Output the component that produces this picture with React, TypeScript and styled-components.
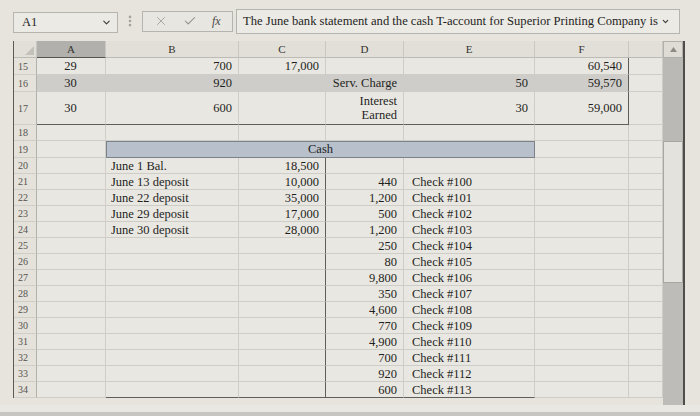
import React from 'react';
import styled, { createGlobalStyle } from 'styled-components';
import { Check, ChevronDown, EllipsisVertical, X } from 'lucide-react';

type Align = 'left' | 'right' | 'center';

interface Spec {
  text?: React.ReactNode;
  align?: Align;
  indent?: number;
}

interface RowDef {
  n: number;
  band?: boolean;
  bottomThick?: boolean;
  thickRight?: number[];
  cells: Spec[];
}

const GlobalStyle = createGlobalStyle`
  * { box-sizing: border-box; }
  html, body { margin: 0; padding: 0; background: #e6e4dd; }
  body { font-family: 'Liberation Serif', 'Times New Roman', serif; color: #1f1f1e; }
`;

const Page = styled.div`
  width: 700px;
  height: 416px;
  overflow: hidden;
  display: flex;
  flex-direction: column;
  background: #e6e4dd;
`;

const Toolbar = styled.div`
  height: 41px;
  flex: none;
  display: flex;
  align-items: center;
  padding: 1px 0 0 13px;
`;

const NameBox = styled.div`
  width: 105px;
  height: 21px;
  margin-top: 3px;
  display: flex;
  align-items: center;
  justify-content: space-between;
  padding: 0 5px 0 8px;
  border: 1px solid #b6b4ae;
  background: #eceae4;
  font-size: 12.5px;
`;

const Dots = styled.div`
  width: 24px;
  display: flex;
  justify-content: center;
  color: #a3a19b;
`;

const ActionBox = styled.div`
  width: 91px;
  height: 21px;
  display: flex;
  align-items: center;
  justify-content: space-around;
  padding: 0 4px;
  border: 1px solid #b6b4ae;
  background: #e8e6e0;
`;

const Fx = styled.span`
  font-style: italic;
  font-size: 12px;
  color: #4a4945;
`;

const FormulaBox = styled.div`
  width: 444px;
  height: 25px;
  margin-left: 3px;
  display: flex;
  align-items: center;
  gap: 3px;
  padding-left: 6px;
  border: 1px solid #b6b4ae;
  background: #eceae4;
  font-size: 12.6px;
  white-space: nowrap;
  overflow: hidden;
`;

const Body = styled.div`
  height: 364px;
  flex: none;
  display: flex;
  align-items: flex-start;
  padding-left: 13px;
`;

const Sheet = styled.div`
  display: grid;
  grid-template-columns: 23px 69px 133px 87px 78px 131px 94px 34px;
  grid-template-rows: 17px 17px 17px 33px 16px 17px repeat(15, 16px);
  border-left: 1px solid #5b5a56;
  background: #e9e7e1;
`;

const Corner = styled.div`
  display: flex;
  align-items: flex-end;
  justify-content: flex-end;
  padding: 0 2px 2px 0;
  background: #e1dfd8;
  border-right: 1px solid #c9c7c1;
  border-bottom: 1px solid #bdbbb5;
`;

const ColHead = styled.div<{ $selected?: boolean }>`
  display: flex;
  align-items: center;
  justify-content: center;
  font-size: 11px;
  color: #33322f;
  background: ${p => (p.$selected ? '#b1b0ac' : '#e1dfd8')};
  border-right: 1px solid #c9c7c1;
  border-bottom: 1px solid ${p => (p.$selected ? '#55544f' : '#bdbbb5')};
`;

const RowHead = styled.div`
  display: flex;
  align-items: center;
  padding-left: 4px;
  font-size: 10px;
  color: #55534f;
  background: #e4e2db;
  border-right: 1px solid #b3b1ab;
  border-bottom: 1px solid #d0cec8;
`;

const Cell = styled.div<{ $align?: Align; $band?: boolean; $rt?: boolean; $bt?: boolean; $indent?: number }>`
  display: flex;
  align-items: center;
  justify-content: ${p => (p.$align === 'right' ? 'flex-end' : p.$align === 'center' ? 'center' : 'flex-start')};
  text-align: ${p => p.$align ?? 'left'};
  padding: 0 6px 0 ${p => p.$indent ?? 5}px;
  font-size: 12.5px;
  line-height: 14px;
  white-space: nowrap;
  background: ${p => (p.$band ? '#cecdc9' : 'transparent')};
  border-right: 1px solid ${p => (p.$rt ? '#5f5e5a' : '#cfcdc7')};
  border-bottom: 1px solid ${p => (p.$bt ? '#5f5e5a' : '#cfcdc7')};
`;

const CashHead = styled.div`
  grid-column: span 4;
  display: flex;
  align-items: center;
  justify-content: center;
  font-size: 12.5px;
  background: #b7c0cb;
  border: 1px solid #7c828a;
`;

const Scrollbar = styled.div`
  width: 22px;
  height: 364px;
  display: flex;
  flex-direction: column;
  border-right: 2px solid #4f4e4a;
`;

const UpButton = styled.div`
  height: 17px;
  display: flex;
  align-items: center;
  justify-content: center;
  background: #dedcd5;
  border: 1px solid #b2b0aa;
`;

const Track = styled.div<{ $h: number }>`
  height: ${p => p.$h}px;
  flex: none;
  background: #bab9b5;
`;

const Thumb = styled.div`
  height: 142px;
  flex: none;
  background: #e4e2dc;
  border: 1px solid #a7a6a1;
`;

const TrackRest = styled.div`
  flex: 1;
  background: #bdbcb8;
`;

const Footer = styled.div`
  flex: 1;
  background: #eae8e3;
  border-bottom: 4px solid #c7c6c2;
`;

const r = (text: string): Spec => ({ text, align: 'right' });
const c = (text: string): Spec => ({ text, align: 'center' });
const l = (text: string, indent = 5): Spec => ({ text, align: 'left', indent });
const e: Spec = {};

const checks: [string, string][] = [
  ['440', 'Check #100'],
  ['1,200', 'Check #101'],
  ['500', 'Check #102'],
  ['1,200', 'Check #103'],
  ['250', 'Check #104'],
  ['80', 'Check #105'],
  ['9,800', 'Check #106'],
  ['350', 'Check #107'],
  ['4,600', 'Check #108'],
  ['770', 'Check #109'],
  ['4,900', 'Check #110'],
  ['700', 'Check #111'],
  ['920', 'Check #112'],
  ['600', 'Check #113'],
];

const debits: [string, string][] = [
  ['June 1 Bal.', '18,500'],
  ['June 13 deposit', '10,000'],
  ['June 22 deposit', '35,000'],
  ['June 29 deposit', '17,000'],
  ['June 30 deposit', '28,000'],
];

const upperRows: RowDef[] = [
  { n: 15, thickRight: [5], cells: [c('29'), r('700'), r('17,000'), e, e, r('60,540'), e] },
  { n: 16, band: true, thickRight: [5], cells: [c('30'), r('920'), e, r('Serv. Charge'), r('50'), r('59,570'), e] },
  {
    n: 17,
    bottomThick: true,
    thickRight: [5],
    cells: [
      c('30'),
      r('600'),
      e,
      { text: <span>Interest<br />Earned</span>, align: 'right' },
      r('30'),
      r('59,000'),
      e,
    ],
  },
  { n: 18, cells: [e, e, e, e, e, e, e] },
];

const tRows: RowDef[] = Array.from({ length: 15 }, (_, i) => {
  const debit = debits[i];
  const credit = i >= 1 ? checks[i - 1] : undefined;
  return {
    n: 20 + i,
    thickRight: [2],
    cells: [
      e,
      debit ? l(debit[0]) : e,
      debit ? r(debit[1]) : e,
      credit ? r(credit[0]) : e,
      credit ? l(credit[1], 8) : e,
      e,
      e,
    ],
  };
});

const Row = ({ row }: { row: RowDef }) => (
  <>
    <RowHead>{row.n}</RowHead>
    {row.cells.map((cell, i) => {
      const tAccount = row.n >= 20 && i >= 1 && i <= 4;
      return (
        <Cell
          key={i}
          $align={cell.align}
          $indent={cell.indent}
          $band={row.band && i < 6}
          $rt={row.thickRight?.includes(i)}
          $bt={(row.bottomThick && i < 6) || (row.n === 34 && tAccount)}
        >
          {cell.text}
        </Cell>
      );
    })}
  </>
);

const columns = ['A', 'B', 'C', 'D', 'E', 'F', ''];

export default function App() {
  return (
    <Page>
      <GlobalStyle />
      <Toolbar>
        <NameBox>
          <span>A1</span>
          <ChevronDown size={11} strokeWidth={2.4} color="#3c3b38" />
        </NameBox>
        <Dots>
          <EllipsisVertical size={14} strokeWidth={2.5} />
        </Dots>
        <ActionBox>
          <X size={14} strokeWidth={1.6} color="#a5a39e" />
          <Check size={14} strokeWidth={1.8} color="#8f8d88" />
          <Fx>fx</Fx>
        </ActionBox>
        <FormulaBox>
          <span>The June bank statement and the cash T-account for Superior Printing Company is</span>
          <ChevronDown size={9} strokeWidth={3} color="#3c3b38" style={{ flex: 'none' }} />
        </FormulaBox>
      </Toolbar>

      <Body>
        <Sheet>
          <Corner>
            <svg width="9" height="9" viewBox="0 0 9 9">
              <polygon points="9,0 9,9 0,9" fill="#c3c1bb" />
            </svg>
          </Corner>
          {columns.map((col, i) => (
            <ColHead key={i} $selected={col === 'A'}>
              {col}
            </ColHead>
          ))}

          {upperRows.map(row => (
            <Row key={row.n} row={row} />
          ))}

          <RowHead>19</RowHead>
          <Cell />
          <CashHead>Cash</CashHead>
          <Cell />
          <Cell />

          {tRows.map(row => (
            <Row key={row.n} row={row} />
          ))}
        </Sheet>

        <Scrollbar>
          <UpButton>
            <svg width="7" height="5" viewBox="0 0 7 5">
              <polygon points="3.5,0 7,5 0,5" fill="#8d8b86" />
            </svg>
          </UpButton>
          <Track $h={83} />
          <Thumb />
          <TrackRest />
        </Scrollbar>
      </Body>

      <Footer />
    </Page>
  );
}
